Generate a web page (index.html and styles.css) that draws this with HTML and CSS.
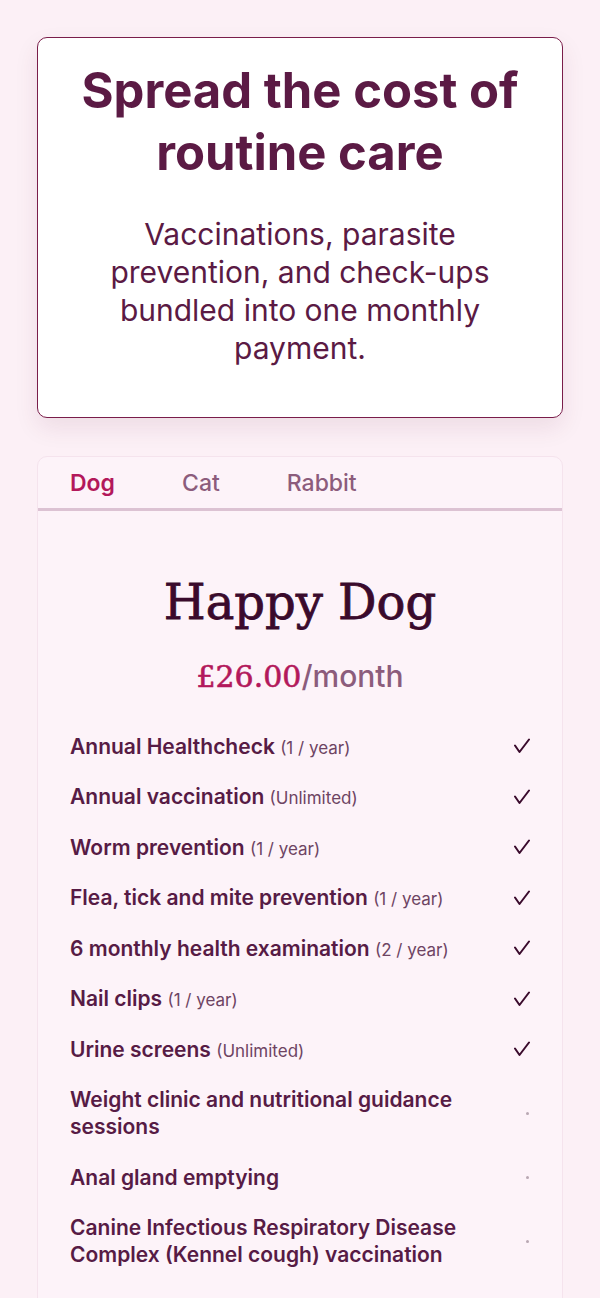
FILE: index.html
```html
<!DOCTYPE html>
<html lang="en">
<head>
<meta charset="UTF-8">
<title>Pet Health Plans</title>
<link rel="stylesheet" href="styles.css">
</head>
<body>
    <div class="page">
        <div class="hero">
            <h1>Spread the cost of routine care</h1>
            <p>Vaccinations, parasite prevention, and check-ups bundled into one monthly payment.</p>
        </div>

        <div class="plan">
            <div class="tabs">
                <span class="tab active">Dog</span>
                <span class="tab">Cat</span>
                <span class="tab">Rabbit</span>
            </div>
            <div class="plan-body">
                <h2>Happy Dog</h2>
                <div class="price"><span class="amount">£26.00</span>/month</div>
                <ul class="features">
                    <li><span class="name">Annual Healthcheck <small>(1 / year)</small></span><span class="mark"><svg viewBox="0 0 16 16" width="16" height="16"><polyline points="1,7.5 5.5,14 15,1.5"/></svg></span></li>
                    <li><span class="name">Annual vaccination <small>(Unlimited)</small></span><span class="mark"><svg viewBox="0 0 16 16" width="16" height="16"><polyline points="1,7.5 5.5,14 15,1.5"/></svg></span></li>
                    <li><span class="name">Worm prevention <small>(1 / year)</small></span><span class="mark"><svg viewBox="0 0 16 16" width="16" height="16"><polyline points="1,7.5 5.5,14 15,1.5"/></svg></span></li>
                    <li><span class="name">Flea, tick and mite prevention <small>(1 / year)</small></span><span class="mark"><svg viewBox="0 0 16 16" width="16" height="16"><polyline points="1,7.5 5.5,14 15,1.5"/></svg></span></li>
                    <li><span class="name">6 monthly health examination <small>(2 / year)</small></span><span class="mark"><svg viewBox="0 0 16 16" width="16" height="16"><polyline points="1,7.5 5.5,14 15,1.5"/></svg></span></li>
                    <li><span class="name">Nail clips <small>(1 / year)</small></span><span class="mark"><svg viewBox="0 0 16 16" width="16" height="16"><polyline points="1,7.5 5.5,14 15,1.5"/></svg></span></li>
                    <li><span class="name">Urine screens <small>(Unlimited)</small></span><span class="mark"><svg viewBox="0 0 16 16" width="16" height="16"><polyline points="1,7.5 5.5,14 15,1.5"/></svg></span></li>
                    <li><span class="name">Weight clinic and nutritional guidance sessions</span><span class="mark"><i class="dot"></i></span></li>
                    <li><span class="name">Anal gland emptying</span><span class="mark"><i class="dot"></i></span></li>
                    <li><span class="name">Canine Infectious Respiratory Disease Complex (Kennel cough) vaccination</span><span class="mark"><i class="dot"></i></span></li>
                </ul>
            </div>
        </div>
    </div>
</body>
</html>
```

FILE: styles.css
```css
* {
    margin: 0;
    padding: 0;
    box-sizing: border-box;
}
body {
    background: #fcf0f6;
    font-family: Inter, "Noto Sans", sans-serif;
    color: #5a1a45;
}
.page {
    padding: 37px 37px 0;
}
.hero {
    background: #fff;
    border: 1px solid #7a1d4a;
    border-radius: 10px;
    box-shadow: 0 10px 24px rgba(90, 20, 60, 0.09);
    padding: 22px 24px 50px;
    text-align: center;
}
.hero h1 {
    font-size: 49px;
    font-weight: 700;
    line-height: 62px;
    color: #5b1a44;
}
.hero p {
    max-width: 430px;
    margin: 31px auto 0;
    font-size: 30px;
    line-height: 38px;
    color: #5b1a44;
}
.plan {
    margin-top: 38px;
    background: #fdf3f9;
    border: 1px solid #f5e3ed;
    border-radius: 10px;
    padding-bottom: 80px;
}
.tabs {
    display: flex;
    gap: 67px;
    height: 54px;
    align-items: center;
    padding: 0 32px;
    border-bottom: 3px solid #dcc2d3;
}
.tab {
    font-size: 23px;
    font-weight: 500;
    color: #8c5c7c;
}
.tab.active {
    font-weight: 600;
    color: #b3185b;
}
.plan-body {
    padding: 62px 32px 0;
}
.plan-body h2 {
    text-align: center;
    font-family: "DejaVu Serif", serif;
    font-size: 48px;
    font-weight: 400;
    line-height: 58px;
    color: #3a0a2c;
    -webkit-text-stroke: 0.8px #3a0a2c;
}
.price {
    margin-top: 25px;
    text-align: center;
    font-size: 30px;
    font-weight: 500;
    line-height: 40px;
    color: #8c5c7c;
}
.price .amount {
    font-family: "DejaVu Serif", serif;
    font-weight: 400;
    color: #b3185b;
    -webkit-text-stroke: 0.6px #b3185b;
}
.features {
    list-style: none;
    margin-top: 24px;
}
.features li {
    display: flex;
    align-items: center;
    justify-content: space-between;
    gap: 20px;
    padding: 11.75px 0;
}
.features .name {
    font-size: 21px;
    font-weight: 600;
    line-height: 27px;
    color: #571b45;
}
.features small {
    font-size: 17px;
    font-weight: 400;
    line-height: 1;
    color: #6e4463;
}
.mark {
    display: flex;
    justify-content: flex-end;
    align-items: center;
    flex: 0 0 16px;
    height: 16px;
}
.mark svg {
    fill: none;
    stroke: #3a0a2c;
    stroke-width: 2;
    stroke-linecap: round;
    stroke-linejoin: round;
}
.dot {
    width: 3px;
    height: 3px;
    margin-right: 1px;
    border-radius: 50%;
    background: #b9a8b3;
}
```
